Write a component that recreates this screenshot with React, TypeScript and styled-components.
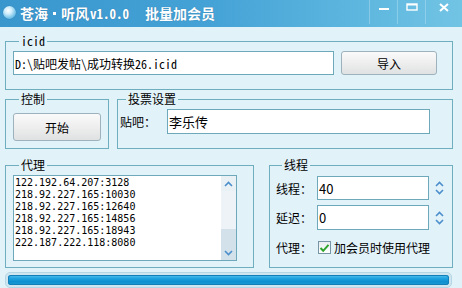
import React from 'react';
import styled, { createGlobalStyle } from 'styled-components';

const mono = `"Noto Sans Mono CJK SC", "Liberation Mono", "Noto Sans CJK SC", monospace`;
const sans = `"Noto Sans CJK SC", "Noto Sans", sans-serif`;

const Global = createGlobalStyle`
  html, body { margin: 0; padding: 0; }
  body { width: 462px; height: 288px; overflow: hidden; background: #e2f2f9; font-family: ${sans}; font-size: 12px; color: #000; }
  * { box-sizing: border-box; }
`;

const Window = styled.div`
  width: 462px;
  height: 288px;
  display: flex;
  flex-direction: column;
  background: #e2f2f9;
`;

const TitleBar = styled.div`
  height: 27px;
  flex: none;
  display: flex;
  align-items: flex-start;
  background: linear-gradient(90deg, #3a97ce 0%, #45a2d6 45%, #5bb5de 75%, #72c4e4 100%);
`;

const AppIcon = styled.div`
  width: 13px;
  height: 13px;
  margin: 6px 0 0 3px;
  border-radius: 50%;
  background: radial-gradient(circle at 40% 35%, #ffffff 0%, #cfeefc 30%, #6bbde6 70%, #2b86c0 100%);
  box-shadow: 0 0 1px rgba(0, 0, 0, 0.3);
`;

const TitleText = styled.div`
  display: flex;
  align-items: center;
  height: 26px;
  margin-left: 4px;
  color: #fff;
  font-family: ${sans};
  font-weight: bold;
  font-size: 14px;
  text-shadow: 0 0 1px rgba(0, 40, 80, 0.4);
  white-space: nowrap;
`;

const TitleDot = styled.span`
  width: 3px;
  height: 3px;
  background: #fff;
  margin: 1px 5px 0 5px;
`;

const Version = styled.span`
  font-family: ${mono};
  font-size: 13px;
  font-weight: bold;
  margin-left: 1px;
`;

const TitleRight = styled.span`
  margin-left: 16px;
`;

const Spacer = styled.div`
  flex: 1;
`;

const WinButtons = styled.div`
  display: flex;
  height: 24px;
`;

const WinBtn = styled.div<{ $w: number }>`
  width: ${(p) => p.$w}px;
  height: 24px;
  border-left: 1px solid rgba(255, 255, 255, 0.25);
  display: flex;
  justify-content: center;
  align-items: flex-start;
  padding-top: 3px;
`;

const Content = styled.div`
  flex: 1;
  display: flex;
  flex-direction: column;
  padding: 8px 9px 0 5px;
`;

const Group = styled.fieldset<{ $h: number; $w?: number; $pad: string }>`
  margin: 0;
  min-width: 0;
  border: 1px solid #6eaebf;
  height: ${(p) => p.$h}px;
  width: ${(p) => (p.$w ? `${p.$w}px` : 'auto')};
  flex: ${(p) => (p.$w ? 'none' : '1')};
  padding: ${(p) => p.$pad};
`;

const Legend = styled.legend<{ $mono?: boolean }>`
  padding: 0 2px;
  margin-left: 6px;
  font-family: ${(p) => (p.$mono ? mono : sans)};
  font-size: 12px;
  line-height: 12px;
  height: 12px;
`;

const Row = styled.div<{ $gap: number; $mt: number }>`
  display: flex;
  gap: ${(p) => p.$gap}px;
  margin-top: ${(p) => p.$mt}px;
`;

const Line = styled.div<{ $gap: number; $mt?: number }>`
  display: flex;
  align-items: center;
  gap: ${(p) => p.$gap}px;
  margin-top: ${(p) => p.$mt ?? 0}px;
`;

const TextBox = styled.div<{ $w: number; $h: number; $mono?: boolean }>`
  width: ${(p) => p.$w}px;
  height: ${(p) => p.$h}px;
  border: 1px solid #6ea9bb;
  background: #fff;
  display: flex;
  align-items: center;
  padding-left: 1px;
  font-family: ${(p) => (p.$mono ? mono : sans)};
  font-size: ${(p) => (p.$mono ? 12 : 13)}px;
  white-space: nowrap;
`;

const Button = styled.div<{ $w: number; $h: number }>`
  width: ${(p) => p.$w}px;
  height: ${(p) => p.$h}px;
  border: 1px solid #9db2bd;
  border-radius: 3px;
  background: linear-gradient(180deg, #fafafa 0%, #eeeeee 50%, #dfe1e2 100%);
  display: flex;
  align-items: center;
  justify-content: center;
  font-size: 12px;
  color: #000;
`;

const Label = styled.span<{ $w: number }>`
  width: ${(p) => p.$w}px;
  flex: none;
  font-size: 12px;
`;

const ListBox = styled.div`
  width: 224px;
  height: 86px;
  border: 1px solid #6ea9bb;
  background: #fff;
  display: flex;
`;

const ListLines = styled.div`
  flex: 1;
  padding: 1px 0 0 1px;
  font-family: "DejaVu Sans Mono", "Liberation Mono", monospace;
  font-size: 10px;
  line-height: 12px;
  color: #000;
`;

const ScrollBar = styled.div`
  width: 15px;
  display: flex;
  flex-direction: column;
  background: #d3e2ea;
`;

const ScrollBtn = styled.div`
  height: 15px;
  display: flex;
  align-items: center;
  justify-content: center;
  background: #eaf1f5;
`;

const ScrollBtnBottom = styled(ScrollBtn)`
  background: #d3e2ea;
`;

const ScrollThumb = styled.div`
  height: 38px;
  background: #edf3f7;
`;

const ScrollTrack = styled.div`
  flex: 1;
`;

const SpinBox = styled.div`
  display: flex;
  align-items: center;
`;

const Spin = styled.div`
  width: 17px;
  height: 24px;
  display: flex;
  flex-direction: column;
  justify-content: center;
  align-items: center;
  gap: 2px;
  margin-left: 2px;
`;

const ThreadCol = styled.div`
  display: flex;
  flex-direction: column;
`;

const Check = styled.div`
  width: 13px;
  height: 13px;
  border: 1px solid #7895a6;
  background: linear-gradient(180deg, #e9eef1, #ffffff);
  display: flex;
  align-items: center;
  justify-content: center;
  margin-right: 3px;
`;

const CheckLine = styled.div`
  display: flex;
  align-items: center;
  margin-top: 9px;
`;

const Progress = styled.div`
  margin-top: 4px;
  width: 447px;
  height: 16px;
  border: 1px solid #b5d6e4;
  border-radius: 5px;
  background: #cfe6f0;
  padding: 2px;
`;

const ProgressFill = styled.div`
  height: 100%;
  border-radius: 3px;
  background: linear-gradient(180deg, #56c0ee 0%, #1fa3e0 35%, #0f8fcf 65%, #1b9ad6 100%);
  box-shadow: inset 0 0 0 1px #137fb6;
`;

const Chevron = ({ up, color = '#4b8fcc' }: { up?: boolean; color?: string }) => (
  <svg width="9" height="6" viewBox="0 0 9 6">
    <path
      d={up ? 'M1 5 L4.5 1.5 L8 5' : 'M1 1 L4.5 4.5 L8 1'}
      fill="none"
      stroke={color}
      strokeWidth="1.6"
    />
  </svg>
);

const proxies = [
  '122.192.64.207:3128',
  '218.92.227.165:10030',
  '218.92.227.165:12640',
  '218.92.227.165:14856',
  '218.92.227.165:18943',
  '222.187.222.118:8080',
];

export default function App() {
  return (
    <>
      <Global />
      <Window>
        <TitleBar>
          <AppIcon />
          <TitleText>
            苍海
            <TitleDot />
            听风<Version>v1.0.0</Version>
            <TitleRight>批量加会员</TitleRight>
          </TitleText>
          <Spacer />
          <WinButtons>
            <WinBtn $w={28}>
              <svg width="12" height="10" viewBox="0 0 12 10">
                <rect x="1" y="5" width="10" height="2" fill="#fff" />
              </svg>
            </WinBtn>
            <WinBtn $w={28}>
              <svg width="12" height="10" viewBox="0 0 12 10">
                <rect x="1" y="1" width="10" height="6" fill="none" stroke="#fff" strokeWidth="1.4" />
                <rect x="1" y="1" width="10" height="1.5" fill="#fff" />
              </svg>
            </WinBtn>
            <WinBtn $w={37}>
              <svg width="12" height="10" viewBox="0 0 12 10">
                <path d="M2 1 L10 8 M10 1 L2 8" stroke="#fff" strokeWidth="2" />
              </svg>
            </WinBtn>
          </WinButtons>
        </TitleBar>
        <Content>
          <Group $h={53} $pad="4px 15px 0 7px">
            <Legend $mono>icid</Legend>
            <Line $gap={7}>
              <TextBox $w={321} $h={24} $mono>
                D:\贴吧发帖\成功转换26.icid
              </TextBox>
              <Button $w={96} $h={24}>导入</Button>
            </Line>
          </Group>
          <Row $gap={8} $mt={3}>
            <Group $h={56} $w={104} $pad="8px 0 0 7px">
              <Legend>控制</Legend>
              <Button $w={88} $h={28}>开始</Button>
            </Group>
            <Group $h={56} $pad="4px 0 0 2px">
              <Legend>投票设置</Legend>
              <Line $gap={0}>
                <Label $w={47}>贴吧：</Label>
                <TextBox $w={263} $h={25}>李乐传</TextBox>
              </Line>
            </Group>
          </Row>
          <Row $gap={15} $mt={10}>
            <Group $h={109} $w={249} $pad="4px 0 0 7px">
              <Legend>代理</Legend>
              <ListBox>
                <ListLines>
                  {proxies.map((p) => (
                    <div key={p}>{p}</div>
                  ))}
                </ListLines>
                <ScrollBar>
                  <ScrollBtn>
                    <Chevron up />
                  </ScrollBtn>
                  <ScrollThumb />
                  <ScrollTrack />
                  <ScrollBtnBottom>
                    <Chevron />
                  </ScrollBtnBottom>
                </ScrollBar>
              </ListBox>
            </Group>
            <Group $h={109} $pad="5px 0 0 6px">
              <Legend>线程</Legend>
              <ThreadCol>
                <Line $gap={0}>
                  <Label $w={41}>线程：</Label>
                  <SpinBox>
                    <TextBox $w={112} $h={24}>40</TextBox>
                    <Spin>
                      <Chevron up />
                      <Chevron />
                    </Spin>
                  </SpinBox>
                </Line>
                <Line $gap={0} $mt={5}>
                  <Label $w={41}>延迟：</Label>
                  <SpinBox>
                    <TextBox $w={112} $h={25}>0</TextBox>
                    <Spin>
                      <Chevron up />
                      <Chevron />
                    </Spin>
                  </SpinBox>
                </Line>
                <CheckLine>
                  <Label $w={42}>代理：</Label>
                  <Check>
                    <svg width="11" height="10" viewBox="0 0 11 10">
                      <path d="M1.5 5 L4.2 7.8 L9.5 1.8" fill="none" stroke="#2ea42e" strokeWidth="2" />
                    </svg>
                  </Check>
                  <span>加会员时使用代理</span>
                </CheckLine>
              </ThreadCol>
            </Group>
          </Row>
          <Progress>
            <ProgressFill />
          </Progress>
        </Content>
      </Window>
    </>
  );
}
